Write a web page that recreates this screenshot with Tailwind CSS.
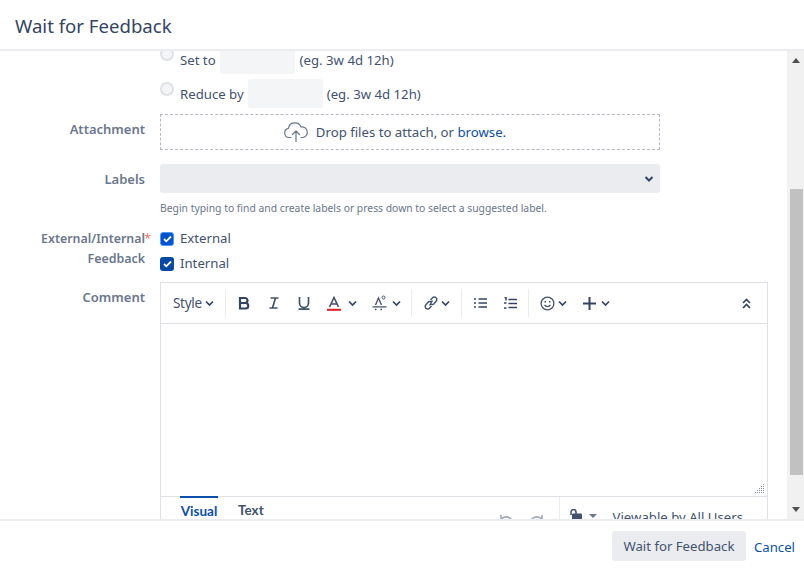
<!DOCTYPE html>
<html><head><meta charset="utf-8"><script src="https://cdn.jsdelivr.net/npm/@tailwindcss/browser@4"></script></head>
<body class="bg-white">
<div class="w-[804px] h-[569px] flex flex-col overflow-hidden bg-white font-['Noto_Sans','Open_Sans',sans-serif] text-[#42526e] text-[13.2px]">
  <header class="h-[51px] shrink-0 border-b-2 border-[#ebecf0] pl-[15px] pt-[12px] text-[18.6px] leading-[28px] text-[#344563]">Wait for Feedback</header>
  <div class="flex-1 min-h-0 flex">
    <div class="flex-1 min-w-0 overflow-hidden">
      <div class="-mt-[4px] flex flex-col">
        <div class="flex">
          <div class="w-[160px] shrink-0"></div>
          <div class="flex flex-col">
            <div class="flex h-[27px] items-center relative">
              <span class="absolute left-0 top-0 size-[14px] rounded-full border-2 border-[#dfe1e6] bg-[#f4f5f7]"></span>
              <span class="ml-[20px]">Set to</span>
              <span class="ml-[4px] w-[75px] h-[27px] bg-[#f4f5f7] rounded-[3px]"></span>
              <span class="ml-[5px]">(eg. 3w 4d 12h)</span>
            </div>
            <div class="flex h-[29px] mt-[5px] items-center relative">
              <span class="absolute left-0 top-[3px] size-[14px] rounded-full border-2 border-[#dfe1e6] bg-[#f4f5f7]"></span>
              <span class="ml-[20px] mt-[3px]">Reduce by</span>
              <span class="ml-[4px] w-[75px] h-[29px] bg-[#f4f5f7] rounded-[3px]"></span>
              <span class="ml-[4px] mt-[3px]">(eg. 3w 4d 12h)</span>
            </div>
          </div>
        </div>
        <div class="flex mt-[6px]">
          <div class="w-[145px] shrink-0 text-right font-semibold text-[13px] text-[#6b778c] leading-[20px] pt-[5px]">Attachment</div>
          <div class="ml-[15px] w-[500px] h-[36px] border border-dashed border-[#b3bac5] flex items-center justify-center gap-[7px] pr-[31px]">
            <svg width="26" height="22" viewBox="0 0 26 22" fill="none" stroke="#6b778c" stroke-width="1.2" stroke-linecap="round" stroke-linejoin="round"><path d="M8 16.500H6a4.600 4.600 0 0 1-.6-9.100A6.600 6.600 0 0 1 18 6a5.300 5.300 0 0 1 2 10.500h-2"/><path d="M13 20.500V10M9.500 13.500 13 10l3.500 3.500"/></svg>
            <span class="pt-[1px]">Drop files to attach, or <span class="text-[#0b4fa8]">browse.</span></span>
          </div>
        </div>
        <div class="flex mt-[14px]">
          <div class="w-[145px] shrink-0 text-right font-semibold text-[13px] text-[#6b778c] leading-[20px] pt-[5px]">Labels</div>
          <div class="ml-[15px] w-[500px] h-[29px] bg-[#ebecf0] rounded-[3px] flex items-center justify-end pr-[6px]">
            <svg width="10" height="8" viewBox="0 0 10 8" fill="none" stroke="#344563" stroke-width="2"><path d="M1.500 2 5 5.500 8.500 2"/></svg>
          </div>
        </div>
        <div class="pl-[160px] mt-[7px] text-[10.35px] leading-[16px] text-[#6b778c]">Begin typing to find and create labels or press down to select a suggested label.</div>
        <div class="flex mt-[13px]">
          <div class="w-[145px] shrink-0 text-right font-semibold text-[12.4px] text-[#6b778c] leading-[20px] relative">
            <div>External/Internal<span class="absolute -right-[6px] font-normal text-[#de350b]/70">*</span></div>
            <div>Feedback</div>
          </div>
          <div class="ml-[15px] flex flex-col gap-[5px]">
            <div class="flex items-center gap-[6px] h-[20px]"><span class="size-[14px] rounded-[3px] bg-[#0052cc] border border-[#4c9aff] flex items-center justify-center"><svg width="9" height="8" viewBox="0 0 9 8" fill="none" stroke="#fff" stroke-width="1.800"><path d="M1 4l2.300 2.300L8 1.500"/></svg></span><span>External</span></div>
            <div class="flex items-center gap-[6px] h-[20px]"><span class="size-[14px] rounded-[3px] bg-[#0747a6] flex items-center justify-center"><svg width="9" height="8" viewBox="0 0 9 8" fill="none" stroke="#fff" stroke-width="1.800"><path d="M1 4l2.300 2.300L8 1.500"/></svg></span><span>Internal</span></div>
          </div>
        </div>
        <div class="flex mt-[8px]">
          <div class="w-[145px] shrink-0 text-right font-semibold text-[13px] text-[#6b778c] leading-[20px] pt-[5px]">Comment</div>
          <div class="ml-[15px] w-[608px] border border-[#dfe1e6] border-b-0">
            <div class="h-[41px] border-b border-[#dfe1e6] flex items-center text-[#42526e] relative">
              <span class="ml-[12px] text-[13.500px] tracking-[-0.3px]">Style</span>
              <svg class="ml-[3px]" width="9" height="7" viewBox="0 0 9 7" fill="none" stroke="#344563" stroke-width="1.700"><path d="M1 1.500 4.500 5 8 1.500"/></svg>
              <span class="ml-[11px] w-px h-[28px] bg-[#ebecf0]"></span>
              <svg class="ml-[11px]" width="14" height="14" viewBox="0 0 14 14" fill="none" stroke="#344563" stroke-width="2.200"><path d="M3 2h5a2.500 2.500 0 0 1 0 5H3zM3 7h5.500a2.700 2.700 0 0 1 0 5.500H3z"/></svg>
              <svg class="ml-[16px]" width="14" height="14" viewBox="0 0 14 14" fill="none" stroke="#42526e" stroke-width="1.700"><path d="M3.500 2h8M2.500 12h8M8.500 2l-3 10"/></svg>
              <svg class="ml-[16px]" width="14" height="14" viewBox="0 0 14 14" fill="none" stroke="#42526e" stroke-width="1.700"><path d="M2.500 1v6a4.500 4.500 0 0 0 9 0V1M1.500 13.200h11"/></svg>
              <svg class="ml-[16px]" width="14" height="15" viewBox="0 0 14 15" fill="none"><path d="M2.500 11 7 1.500 11.500 11M4 8h6" stroke="#42526e" stroke-width="1.600"/><rect y="12.800" width="14" height="2" fill="#de1c24"/></svg>
              <svg class="ml-[7px]" width="9" height="7" viewBox="0 0 9 7" fill="none" stroke="#344563" stroke-width="1.700"><path d="M1 1.500 4.500 5 8 1.500"/></svg>
              <svg class="ml-[15px]" width="15" height="16" viewBox="0 0 15 16" fill="none" stroke="#42526e" stroke-width="1.300"><path d="M3.500 10 6.500 3 9.500 10M0.500 11.800h14"/><circle cx="11.500" cy="2.500" r="1.500" stroke-width="1"/><path d="M3 14.500h1.500M8.500 14.500H10"/></svg>
              <svg class="ml-[5px]" width="9" height="7" viewBox="0 0 9 7" fill="none" stroke="#344563" stroke-width="1.700"><path d="M1 1.500 4.500 5 8 1.500"/></svg>
              <span class="ml-[10px] w-px h-[28px] bg-[#ebecf0]"></span>
              <svg class="ml-[11px]" width="16" height="14" viewBox="0 0 16 14" fill="none" stroke="#42526e" stroke-width="1.400"><path d="M6.500 9.500 9.500 4.500M7.500 4 9.300 2a2.500 2.500 0 0 1 4 3L11 7.800a2.500 2.500 0 0 1-3.600 0M8.500 10l-1.800 2a2.500 2.500 0 0 1-4-3L5 6.200a2.500 2.500 0 0 1 3.600 0"/></svg>
              <svg class="ml-[2px]" width="9" height="7" viewBox="0 0 9 7" fill="none" stroke="#344563" stroke-width="1.700"><path d="M1 1.500 4.500 5 8 1.500"/></svg>
              <span class="ml-[11px] w-px h-[28px] bg-[#ebecf0]"></span>
              <svg class="ml-[12px]" width="13" height="12" viewBox="0 0 13 12" fill="none" stroke="#344563" stroke-width="1.500"><path d="M4.500 2H13M4.500 6H13M4.500 10H13M0 2h2M0 6h2M0 10h2"/></svg>
              <svg class="ml-[17px]" width="13" height="13" viewBox="0 0 13 13" fill="none" stroke="#344563" stroke-width="1.500"><path d="M4.500 2.500H13M4.500 6.500H13M4.500 10.500H13M0.500 0.500h1.500v3M0 6h2.500M0 11h2.500" /></svg>
              <span class="ml-[11px] w-px h-[28px] bg-[#ebecf0]"></span>
              <svg class="ml-[11px]" width="15" height="15" viewBox="0 0 15 15" fill="none" stroke="#42526e" stroke-width="1.300"><circle cx="7.500" cy="7.500" r="6.400"/><path d="M4.500 8.800c1.500 2.300 4.500 2.300 6 0"/><path d="M5.300 5v1.500M9.700 5v1.500" stroke-width="1.500"/></svg>
              <svg class="ml-[3px]" width="9" height="7" viewBox="0 0 9 7" fill="none" stroke="#344563" stroke-width="1.700"><path d="M1 1.500 4.500 5 8 1.500"/></svg>
              <svg class="ml-[16px]" width="13" height="13" viewBox="0 0 13 13" fill="none" stroke="#344563" stroke-width="2"><path d="M6.500 0v13M0 6.500h13"/></svg>
              <svg class="ml-[5px]" width="9" height="7" viewBox="0 0 9 7" fill="none" stroke="#344563" stroke-width="1.700"><path d="M1 1.500 4.500 5 8 1.500"/></svg>
              <svg class="absolute right-[16px] top-[15px]" width="9" height="11" viewBox="0 0 9 11" fill="none" stroke="#344563" stroke-width="1.700"><path d="M1 5 4.500 1.500 8 5M1 10 4.500 6.500 8 10"/></svg>
            </div>
            <div class="h-[173px] border-b border-[#dfe1e6] relative">
              <svg class="absolute right-[2px] bottom-[2px]" width="10" height="10" viewBox="0 0 10 10" fill="#8993a4"><rect x="8" y="0" width="1" height="1"/><rect x="6" y="2" width="1" height="1"/><rect x="8" y="2" width="1" height="1"/><rect x="4" y="4" width="1" height="1"/><rect x="6" y="4" width="1" height="1"/><rect x="8" y="4" width="1" height="1"/><rect x="2" y="6" width="1" height="1"/><rect x="4" y="6" width="1" height="1"/><rect x="6" y="6" width="1" height="1"/><rect x="8" y="6" width="1" height="1"/><rect x="0" y="8" width="1" height="1"/><rect x="2" y="8" width="1" height="1"/><rect x="4" y="8" width="1" height="1"/><rect x="6" y="8" width="1" height="1"/><rect x="8" y="8" width="1" height="1"/></svg>
            </div>
            <div class="h-[40px] flex relative">
              <div class="ml-[19px] -mt-[1px] border-t-2 border-[#0b4fa8] h-[24px] w-[38px] font-bold text-[#0b4fa8] text-[13.500px] font-['Lato'] leading-[26px] text-center">Visual</div>
              <div class="ml-[20px] font-bold text-[13.500px] font-['Lato'] leading-[28px] -mt-[1px]">Text</div>
              <div class="ml-auto flex items-start pt-[15px]">
                <svg width="16" height="14" viewBox="0 0 16 14" fill="none" stroke="#a5adba" stroke-width="1.700"><path d="M2 3v5h5M2 8a6 6 0 0 1 11 1"/></svg>
                <svg class="ml-[13px]" width="16" height="14" viewBox="0 0 16 14" fill="none" stroke="#a5adba" stroke-width="1.700"><path d="M14 3v5H9M14 8a6 6 0 0 0-11 1"/></svg>
                <span class="ml-[15px] -mt-[15px] w-px h-[30px] bg-[#ebecf0]"></span>
                <svg class="ml-[9px] -mt-[3px]" width="15" height="15" viewBox="0 0 15 15" fill="none"><path d="M2 6V3a2.500 2.500 0 0 1 5 0v2" stroke="#42526e" stroke-width="1.500"/><rect x="3" y="4.500" width="10" height="6" rx="1" fill="#42526e"/></svg>
                <svg class="ml-[5px] mt-[2px]" width="8" height="4" viewBox="0 0 8 4" fill="#6b778c"><path d="M0 0h8L4 4z"/></svg>
                <span class="ml-[16px] mr-[24px] leading-[20px] -mt-[5px]">Viewable by All Users</span>
              </div>
            </div>
          </div>
        </div>
      </div>
    </div>
    <div class="w-[17px] shrink-0 bg-[#f1f1f1] flex flex-col items-center">
      <svg class="mt-[7px]" width="8" height="5" viewBox="0 0 8 5" fill="#505050"><path d="M4 0l4 5H0z"/></svg>
      <div class="mt-[126px] w-[13px] ml-[2px] h-[286px] bg-[#c1c1c1]"></div>
      <svg class="mt-[32px]" width="8" height="5" viewBox="0 0 8 5" fill="#505050"><path d="M0 0h8L4 5z"/></svg>
    </div>
  </div>
  <footer class="h-[50px] shrink-0 border-t-2 border-[#ebecf0] flex items-start justify-end pt-[10px] pr-[9px]">
    <span class="h-[30px] w-[134px] pt-[1px] bg-[#ebecf0] rounded-[3px] flex items-center justify-center">Wait for Feedback</span>
    <span class="ml-[8px] text-[#0b4fa8] leading-[30px] pt-[1px]">Cancel</span>
  </footer>
</div>
</body></html>
